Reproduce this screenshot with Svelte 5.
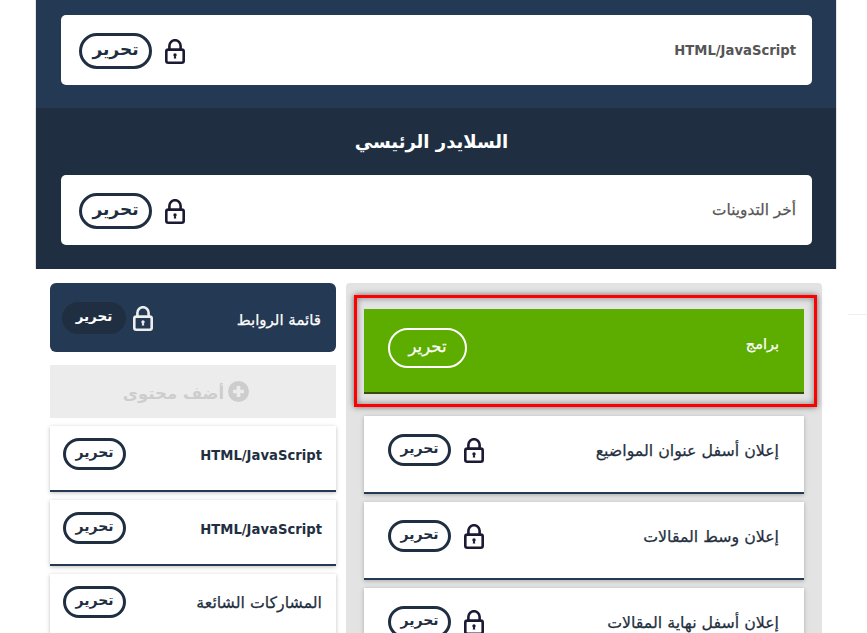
<script>
    const sidebarItems = [
        { title: "HTML/JavaScript" },
        { title: "HTML/JavaScript" },
        { title: "المشاركات الشائعة" },
    ];
    const mainItems = ["إعلان أسفل عنوان المواضيع", "إعلان وسط المقالات", "إعلان أسفل نهاية المقالات"];
</script>

{#snippet lock()}
    <svg class="lock" viewBox="0 0 20 25" fill="none" stroke="currentColor" stroke-width="2.6" aria-hidden="true">
        <path d="M4.4 10.5V6.8a5.6 5.6 0 0 1 11.2 0v3.7"></path>
        <rect x="1.3" y="10.6" width="17.4" height="13.1" rx="2"></rect>
        <circle cx="10" cy="16" r="1.7" fill="currentColor" stroke="none"></circle>
        <path d="M8.7 19.6 9.5 16h1l.8 3.6z" fill="currentColor" stroke="none"></path>
    </svg>
{/snippet}

<div class="page">
    <section class="band band-top">
        <div class="row-card">
            <span class="name grey latin">HTML/JavaScript</span>
            <div class="actions">
                {@render lock()}
                <button class="edit large">تحرير</button>
            </div>
        </div>
    </section>

    <section class="band band-slider">
        <h2>السلايدر الرئيسي</h2>
        <div class="row-card">
            <span class="name grey">أخر التدوينات</span>
            <div class="actions">
                {@render lock()}
                <button class="edit large">تحرير</button>
            </div>
        </div>
    </section>

    <div class="columns">
        <aside class="side">
            <div class="link-list">
                <span class="name">قائمة الروابط</span>
                <div class="actions">
                    {@render lock()}
                    <button class="edit filled">تحرير</button>
                </div>
            </div>

            <div class="add-content">
                <svg viewBox="0 0 21 21" aria-hidden="true">
                    <circle cx="10.5" cy="10.5" r="10.5" fill="#cdcdcd"></circle>
                    <path d="M10.5 5v11M5 10.5h11" stroke="#ececec" stroke-width="3.6"></path>
                </svg>
                <span>أضف محتوى</span>
            </div>

            {#each sidebarItems as item}
                <div class="widget small">
                    <span class="name" class:latin={item.title.startsWith("HTML")}>{item.title}</span>
                    <button class="edit">تحرير</button>
                </div>
            {/each}
        </aside>

        <main class="content">
            <div class="selected">
                <div class="green">
                    <span class="name">برامج</span>
                    <button class="edit outline">تحرير</button>
                </div>
            </div>

            {#each mainItems as title}
                <div class="widget tall">
                    <span class="name">{title}</span>
                    <div class="actions">
                        {@render lock()}
                        <button class="edit">تحرير</button>
                    </div>
                </div>
            {/each}
        </main>
    </div>

    <div class="stray-line"></div>
</div>

<style>
    :global(body) {
        margin: 0;
        background: #fff;
        overflow: hidden;
    }

    .page {
        height: 633px;
        overflow: hidden;
        font-family: "DejaVu Sans", sans-serif;
        position: relative;
    }

    .band {
        box-sizing: border-box;
        width: 802px;
        margin-left: 35px;
        padding: 0 24px 0 25px;
        border-left: 1px solid #e4e4e4;
        border-right: 1px solid #e4e4e4;
    }

    .band-top {
        height: 108px;
        padding-top: 15px;
        background: #243953;
    }

    .band-slider {
        height: 161px;
        background: #1f2f41;
    }

    h2 {
        margin: 0;
        height: 67px;
        padding-right: 10px;
        line-height: 67px;
        text-align: center;
        font-size: 18px;
        font-weight: 700;
        color: #fff;
    }

    .row-card {
        box-sizing: border-box;
        height: 70px;
        padding: 18px 16px 0 18px;
        background: #fff;
        border-radius: 5px;
        display: flex;
        flex-direction: row-reverse;
        justify-content: space-between;
        align-items: flex-start;
    }

    .row-card .name {
        padding-top: 8px;
    }

    .name {
        direction: rtl;
        font-size: 15.8px;
        line-height: 18px;
        color: #1f2f41;
        -webkit-text-stroke: 0.25px currentColor;
    }

    .name.latin {
        font-size: 13.2px;
        font-weight: 700;
        line-height: 20px;
        -webkit-text-stroke: 0;
    }

    .name.grey {
        font-size: 15.3px;
        color: #555;
    }

    .name.grey.latin {
        font-size: 13.2px;
    }

    .actions {
        display: flex;
        flex-direction: row-reverse;
        align-items: center;
        gap: 13px;
    }

    .lock {
        width: 20px;
        height: 25px;
        color: #1c1a33;
        flex: none;
    }

    .edit {
        box-sizing: border-box;
        width: 63px;
        height: 32px;
        padding: 0 0 4px;
        background: #fff;
        border: 3px solid #1f2f41;
        border-radius: 16px;
        font-family: inherit;
        font-size: 14px;
        font-weight: 700;
        color: #1f2f41;
    }

    .edit.large {
        width: 73px;
        height: 36px;
        border-radius: 18px;
        font-size: 17px;
    }

    .edit.filled {
        width: 64px;
        background: #1f2f41;
        border-color: #1f2f41;
        font-size: 13.5px;
        color: #fff;
    }

    .edit.outline {
        width: 79px;
        height: 40px;
        border: 2px solid #fff;
        border-radius: 20px;
        background: transparent;
        font-size: 16.5px;
        font-weight: 400;
        -webkit-text-stroke: 0.25px currentColor;
        color: #fff;
    }

    .columns {
        width: 772px;
        margin: 14px 0 0 50px;
        display: grid;
        grid-template-columns: 286px 476px;
        gap: 10px;
    }

    .side {
        display: flex;
        flex-direction: column;
    }

    .link-list {
        box-sizing: border-box;
        height: 69px;
        padding: 19px 15px 0 12px;
        background: #243953;
        border-radius: 6px;
        display: flex;
        flex-direction: row-reverse;
        justify-content: space-between;
        align-items: flex-start;
    }

    .link-list .actions {
        gap: 7px;
    }

    .link-list .name {
        padding-top: 9px;
        font-size: 15px;
        color: #fff;
    }

    .link-list .lock {
        color: #eee;
    }

    .add-content {
        box-sizing: border-box;
        height: 53px;
        margin: 13px 0 8px;
        padding: 3px 14px 0 0;
        background: #ececec;
        display: flex;
        flex-direction: row-reverse;
        justify-content: center;
        align-items: center;
        gap: 4px;
        font-size: 16.5px;
        font-weight: 700;
        color: #cdcdcd;
    }

    .add-content svg {
        width: 21px;
        height: 21px;
        margin-top: -3px;
    }

    .widget {
        box-sizing: border-box;
        background: #fff;
        border-bottom: 2px solid #243953;
        box-shadow: 0 1px 4px rgba(0, 0, 0, 0.25);
        display: flex;
        flex-direction: row-reverse;
        justify-content: space-between;
        align-items: flex-start;
    }

    .widget.small {
        height: 66px;
        margin-bottom: 8px;
        padding: 12px 14px 0 13px;
    }

    .widget.small .name {
        padding-top: 8px;
    }

    .widget.tall {
        height: 78px;
        margin: 0 18px 8px;
        padding: 18px 25px 0 24px;
    }

    .widget.tall .name {
        padding-top: 8px;
    }

    .content {
        box-sizing: border-box;
        height: 350px;
        padding-top: 12px;
        background: #e3e3e3;
        border-radius: 4px 4px 0 0;
    }

    .selected {
        box-sizing: border-box;
        width: 463px;
        height: 112px;
        margin: 0 0 9px 8px;
        padding: 11px 10px 10px 7px;
        border: 3px solid #f00;
        box-shadow:
            0 0 6px rgba(0, 0, 0, 0.55),
            inset 0 0 6px rgba(0, 0, 0, 0.45);
    }

    .green {
        box-sizing: border-box;
        height: 85px;
        padding: 19px 25px 0 24px;
        background: #5cad00;
        border-bottom: 2px solid #3a4a10;
        display: flex;
        flex-direction: row-reverse;
        justify-content: space-between;
        align-items: flex-start;
    }

    .green .name {
        padding-top: 7px;
        font-size: 14.5px;
        color: #fff;
    }

    .stray-line {
        position: absolute;
        left: 848px;
        top: 314px;
        width: 19px;
        height: 1px;
        background: #eee;
    }
</style>
